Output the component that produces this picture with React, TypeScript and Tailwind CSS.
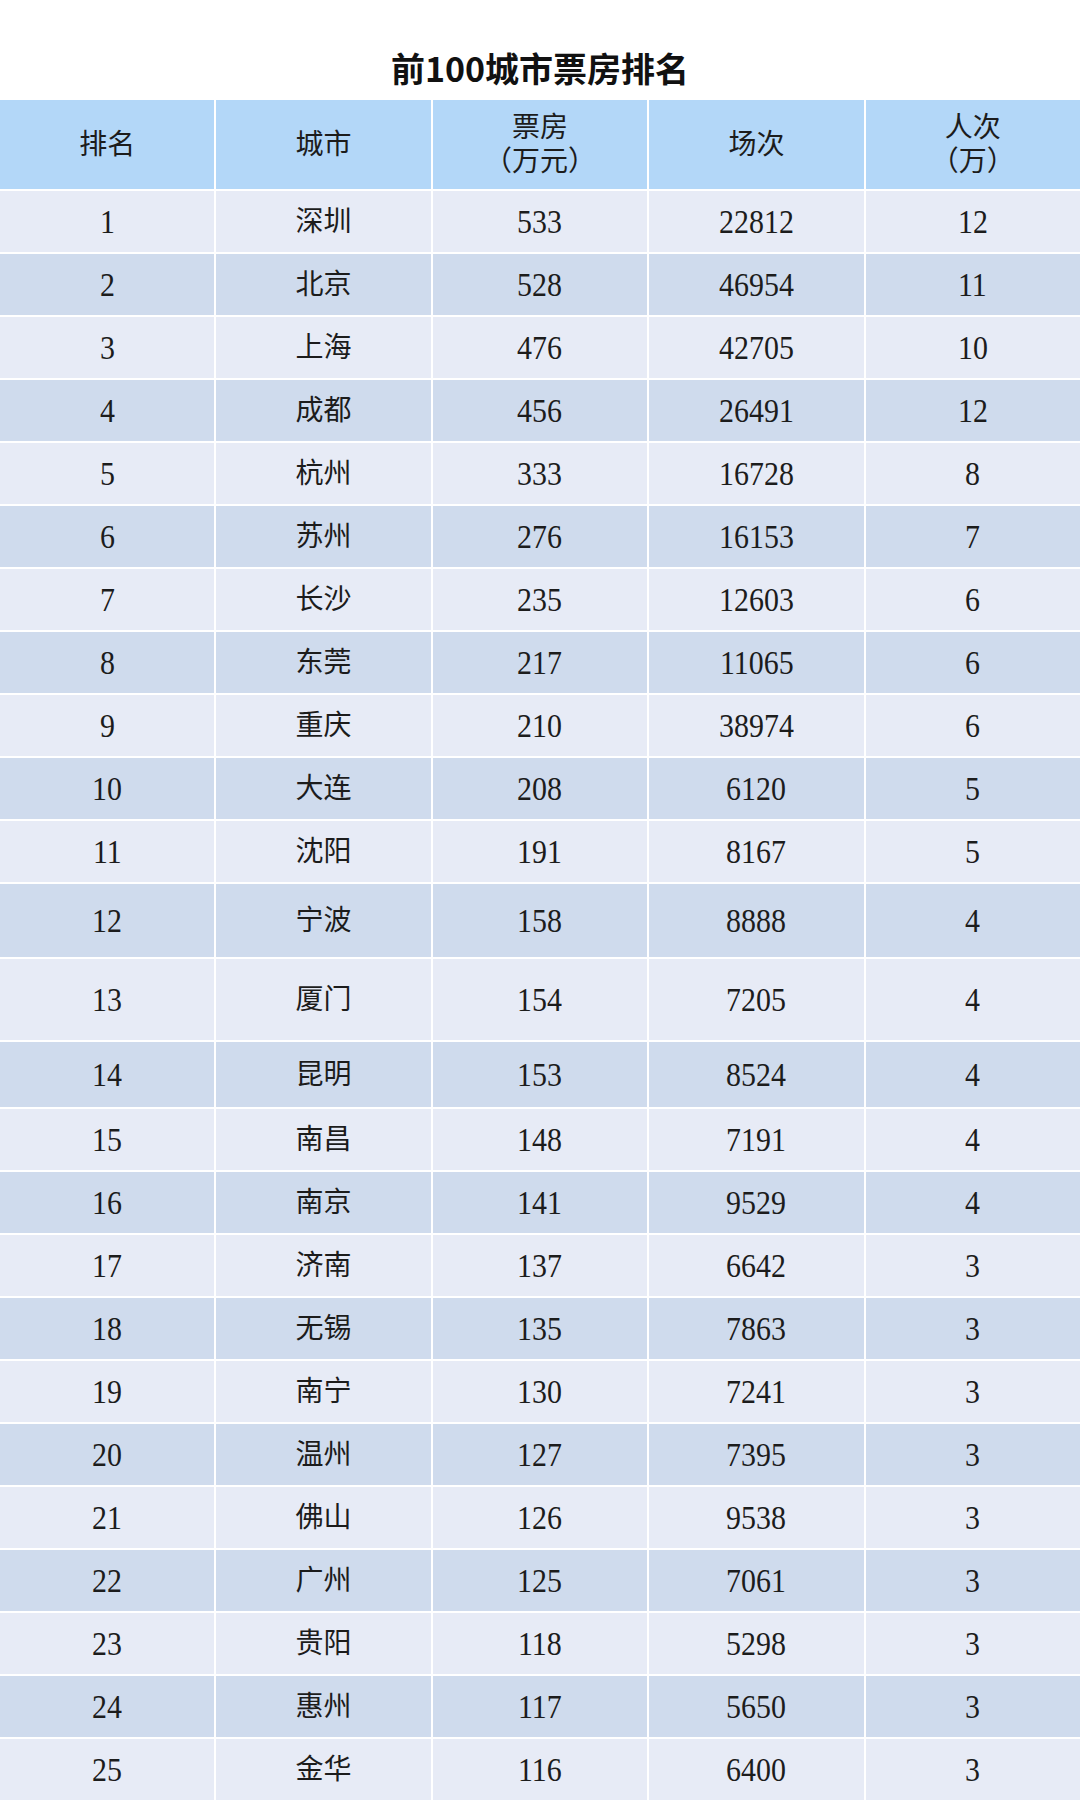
import React from "react";

type Row = { rank: number; city: string; box: number; shows: number; people: number; h?: string };

const rows: Row[] = [
  { rank: 1, city: "深圳", box: 533, shows: 22812, people: 12 },
  { rank: 2, city: "北京", box: 528, shows: 46954, people: 11 },
  { rank: 3, city: "上海", box: 476, shows: 42705, people: 10 },
  { rank: 4, city: "成都", box: 456, shows: 26491, people: 12 },
  { rank: 5, city: "杭州", box: 333, shows: 16728, people: 8 },
  { rank: 6, city: "苏州", box: 276, shows: 16153, people: 7 },
  { rank: 7, city: "长沙", box: 235, shows: 12603, people: 6 },
  { rank: 8, city: "东莞", box: 217, shows: 11065, people: 6 },
  { rank: 9, city: "重庆", box: 210, shows: 38974, people: 6 },
  { rank: 10, city: "大连", box: 208, shows: 6120, people: 5 },
  { rank: 11, city: "沈阳", box: 191, shows: 8167, people: 5 },
  { rank: 12, city: "宁波", box: 158, shows: 8888, people: 4, h: "h-[73px]" },
  { rank: 13, city: "厦门", box: 154, shows: 7205, people: 4, h: "h-[81px]" },
  { rank: 14, city: "昆明", box: 153, shows: 8524, people: 4, h: "h-[65px]" },
  { rank: 15, city: "南昌", box: 148, shows: 7191, people: 4 },
  { rank: 16, city: "南京", box: 141, shows: 9529, people: 4 },
  { rank: 17, city: "济南", box: 137, shows: 6642, people: 3 },
  { rank: 18, city: "无锡", box: 135, shows: 7863, people: 3 },
  { rank: 19, city: "南宁", box: 130, shows: 7241, people: 3 },
  { rank: 20, city: "温州", box: 127, shows: 7395, people: 3 },
  { rank: 21, city: "佛山", box: 126, shows: 9538, people: 3 },
  { rank: 22, city: "广州", box: 125, shows: 7061, people: 3 },
  { rank: 23, city: "贵阳", box: 118, shows: 5298, people: 3 },
  { rank: 24, city: "惠州", box: 117, shows: 5650, people: 3 },
  { rank: 25, city: "金华", box: 116, shows: 6400, people: 3 },
];

const Cell = ({ children, bg }: { children: React.ReactNode; bg: string }) => (
  <div className={`flex items-center justify-center text-center ${bg}`}>{children}</div>
);

// the sheet uses tall, narrow serif digits
const Num = ({ v }: { v: number }) => (
  <span className="inline-block text-[34px] leading-none scale-x-[0.88]">{v}</span>
);

export default function App() {
  return (
    <div className="w-[1080px] h-[1800px] bg-white overflow-hidden">
      {/* title */}
      <div className="h-[100px] pt-[36px] flex items-center justify-center">
        <h1 className="text-[34px] leading-none font-bold text-[#111] font-[family-name:Noto_Sans_CJK_SC,sans-serif]">
          前100城市票房排名
        </h1>
      </div>

      <div className="flex flex-col gap-[2px] text-[#1c1c1c] font-[family-name:Liberation_Serif,Noto_Sans_CJK_SC,serif]">
        {/* header */}
        <div className="grid grid-cols-5 gap-[2px] h-[89px] text-[28px] leading-[34px]">
          <Cell bg="bg-[#b3d7f8]">排名</Cell>
          <Cell bg="bg-[#b3d7f8]">城市</Cell>
          <Cell bg="bg-[#b3d7f8]">
            <span className="block">
              票房
              <br />
              （万元）
            </span>
          </Cell>
          <Cell bg="bg-[#b3d7f8]">场次</Cell>
          <Cell bg="bg-[#b3d7f8]">
            <span className="block">
              人次
              <br />
              （万）
            </span>
          </Cell>
        </div>

        {rows.map((r, i) => {
          const bg = i % 2 === 0 ? "bg-[#e7ebf6]" : "bg-[#cfdbed]";
          return (
            <div key={r.rank} className={`grid grid-cols-5 gap-[2px] ${r.h ?? "h-[61px]"}`}>
              <Cell bg={bg}>
                <Num v={r.rank} />
              </Cell>
              <Cell bg={bg}>
                <span className="text-[28px]">{r.city}</span>
              </Cell>
              <Cell bg={bg}>
                <Num v={r.box} />
              </Cell>
              <Cell bg={bg}>
                <Num v={r.shows} />
              </Cell>
              <Cell bg={bg}>
                <Num v={r.people} />
              </Cell>
            </div>
          );
        })}
      </div>
    </div>
  );
}
